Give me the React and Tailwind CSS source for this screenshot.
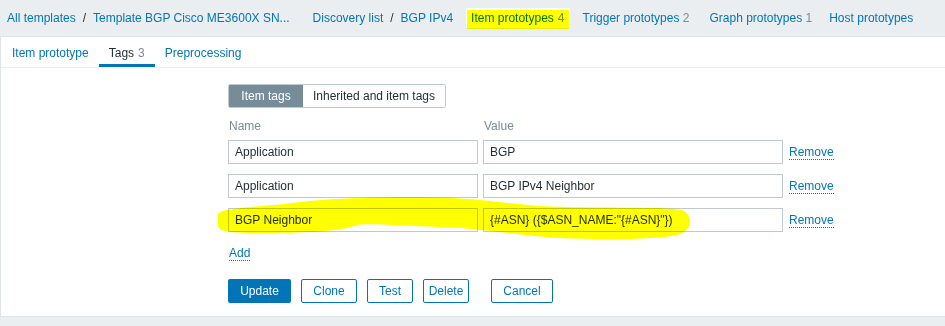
import React from "react";

const font = { fontFamily: '"Liberation Sans", Arial, sans-serif' };

function Sep() {
  return <span className="mx-[7px] text-[#1f2c33]">/</span>;
}

function Row({ name, value }) {
  return (
    <div className="flex items-center h-[24px]">
      <input
        readOnly
        value={name}
        className="w-[250px] h-[24px] border border-[#bfc9ce] px-[6px] text-[12px] text-[#1f2c33] bg-white outline-none"
        style={font}
      />
      <input
        readOnly
        value={value}
        className="ml-[5px] w-[300px] h-[24px] border border-[#bfc9ce] px-[6px] text-[12px] text-[#1f2c33] bg-white outline-none"
        style={font}
      />
      <span className="ml-[6px] text-[#0275b8] border-b border-dotted border-[#0275b8] leading-[14px]">Remove</span>
    </div>
  );
}

export default function App() {
  return (
    <div className="relative w-[945px] h-[326px] bg-[#ebeef0] text-[12px] overflow-hidden" style={font}>
      {/* breadcrumb / navigation */}
      <div className="flex items-center h-[37px] pl-[7px] text-[#0275b8] border-b border-[#dfe4e7]">
        <span>All templates</span>
        <Sep />
        <span>Template BGP Cisco ME3600X SN...</span>
        <span className="ml-[23px]">Discovery list</span>
        <Sep />
        <span>BGP IPv4</span>
        <span className="ml-[13px] bg-white px-[5px] h-[20px] flex items-center rounded-[2px]">
          Item prototypes <span className="ml-[4px] text-[#768d99]">4</span>
        </span>
        <span className="ml-[13px]">
          Trigger prototypes <span className="text-[#768d99]">2</span>
        </span>
        <span className="ml-[20px]">
          Graph prototypes <span className="text-[#768d99]">1</span>
        </span>
        <span className="ml-[17px]">Host prototypes</span>
      </div>

      {/* panel */}
      <div className="bg-white border-l border-b border-[#dfe4e7] h-[280px]">
        <div className="flex h-[31px] border-b border-[#ebeef0] pl-[1px]">
          <div className="px-[10px] flex items-center text-[#0275b8] pt-[2px]">Item prototype</div>
          <div className="px-[10px] flex items-center text-[#1f2c33] border-b-[3px] border-[#0275b8] pt-[5px]">
            Tags <span className="ml-[4px] text-[#768d99]">3</span>
          </div>
          <div className="px-[10px] flex items-center text-[#0275b8] pt-[2px]">Preprocessing</div>
        </div>

        <div className="pl-[227px] pt-[16px]">
          <div className="flex h-[24px] w-[218px] border border-[#bfc9ce] rounded-[2px] overflow-hidden">
            <div className="w-[74px] bg-[#768d99] text-white flex items-center justify-center">Item tags</div>
            <div className="flex-1 bg-white text-[#1f2c33] flex items-center justify-center">Inherited and item tags</div>
          </div>

          <div className="flex mt-[10px] text-[#768d99] h-[15px] items-center">
            <span className="w-[255px] pl-[1px]">Name</span>
            <span className="pl-[1px]">Value</span>
          </div>

          <div className="flex flex-col gap-[10px] mt-[7px]">
            <Row name="Application" value="BGP" />
            <Row name="Application" value="BGP IPv4 Neighbor" />
            <Row name="BGP Neighbor" value={'{#ASN} ({$ASN_NAME:"{#ASN}"})'} />
          </div>

          <div className="mt-[14px] h-[15px] flex items-center">
            <span className="text-[#0275b8] border-b border-dotted border-[#0275b8] leading-[14px] ml-[1px]">Add</span>
          </div>

          <div className="flex mt-[18px] h-[24px]">
            <button className="w-[63px] h-[24px] bg-[#0275b8] text-white rounded-[2px] text-[12px]" style={font}>Update</button>
            <button className="ml-[10px] w-[56px] h-[24px] border border-[#0275b8] text-[#0275b8] bg-white rounded-[2px] text-[12px]" style={font}>Clone</button>
            <button className="ml-[10px] w-[46px] h-[24px] border border-[#0275b8] text-[#0275b8] bg-white rounded-[2px] text-[12px]" style={font}>Test</button>
            <button className="ml-[10px] w-[46px] h-[24px] border border-[#0275b8] text-[#0275b8] bg-white rounded-[2px] text-[12px]" style={font}>Delete</button>
            <button className="ml-[22px] w-[62px] h-[24px] border border-[#0275b8] text-[#0275b8] bg-white rounded-[2px] text-[12px]" style={font}>Cancel</button>
          </div>
        </div>
      </div>

      {/* yellow highlighter annotations */}
      <svg className="absolute inset-0 pointer-events-none mix-blend-multiply" width="945" height="326">
        <rect x="467" y="10" width="102" height="19" fill="#ffff00" />
        <path
          d="M218,214 C220,209 250,207 285,204 C320,199 360,197 420,197 C470,197 500,203 540,206 C600,209 660,206 682,210 C693,214 693,230 680,234 C660,240 600,240 560,238 C520,236 480,228 440,227 C400,226 372,223 357,225 C340,232 300,233 260,233 C235,233 218,232 218,226 Z"
          fill="#ffff00"
        />
      </svg>
    </div>
  );
}
